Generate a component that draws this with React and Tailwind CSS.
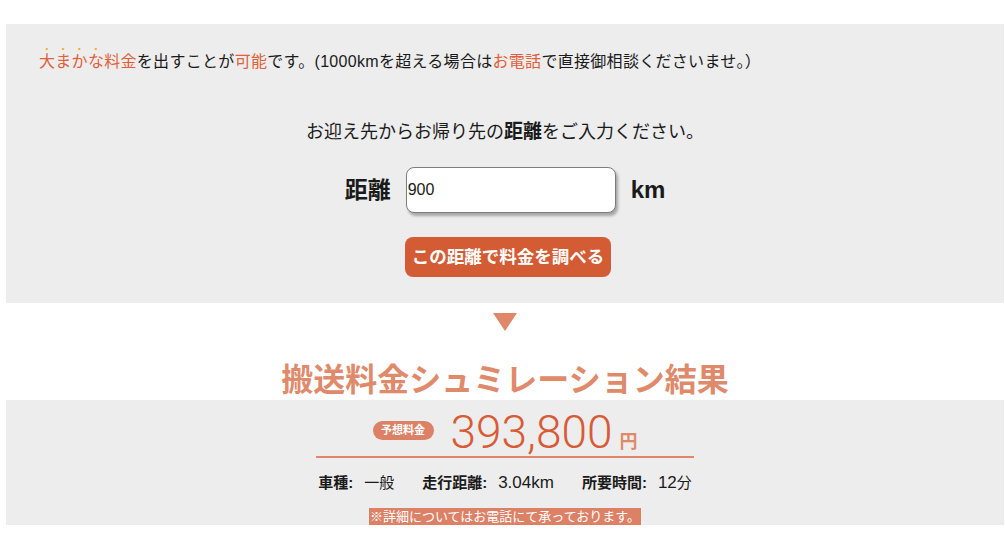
export default function App() {
  const jp = { fontFamily: '"Liberation Sans", "Noto Sans CJK JP", sans-serif' };
  const dot = "[text-emphasis-style:dot] [text-emphasis-color:#f5a623] [text-emphasis-position:over_right]";
  return (
    <div className="bg-white w-[1005px] h-[541px] pt-[24px] pl-[6px] pr-[1px] text-[#1a1a1a]" style={jp}>
      <div className="bg-[#ededed] h-[279px] flex flex-col">
        <p className="mt-[20px] ml-[33px] text-[16px] leading-[24px] tracking-[0.3px] whitespace-nowrap">
          <span className={`text-[#e0603a] ${dot}`}>大まかな</span>
          <span className="text-[#e0603a]">料金</span>を出すことが
          <span className="text-[#e0603a]">可能</span>です。(1000kmを超える場合は
          <span className="text-[#e0603a]">お電話</span>で直接御相談くださいませ。）
        </p>
        <p className="mt-[46px] text-center text-[18px] leading-[24px]">
          お迎え先からお帰り先の<b className="text-[19px]">距離</b>をご入力ください。
        </p>
        <div className="mt-[23px] h-[46px] flex items-center justify-center gap-[15px]">
          <span className="text-[23px] font-bold">距離</span>
          <div className="w-[210px] h-[46px] bg-white border border-[#7d7d7d] rounded-[8px] shadow-[2px_3px_3px_rgba(0,0,0,0.3)] flex items-center pl-[1px] text-[16px]">
            900
          </div>
          <span className="text-[24px] font-bold">km</span>
        </div>
        <div className="mt-[24px] flex justify-center pl-[6px]">
          <div className="w-[206px] h-[40px] bg-[#d45c35] rounded-[8px] flex items-center justify-center text-white font-bold text-[17.5px] whitespace-nowrap">
            この距離で料金を調べる
          </div>
        </div>
      </div>

      <div className="flex flex-col items-center">
        <svg width="24" height="18" viewBox="0 0 24 18" className="mt-[10px]">
          <polygon points="0,0 24,0 12,18" fill="#e0876a" />
        </svg>
        <h2 className="mt-[29px] h-[40px] leading-[40px] text-[32px] font-bold text-[#e08a6c] whitespace-nowrap">
          搬送料金シュミレーション結果
        </h2>
      </div>

      <div className="bg-[#ededed] h-[125px] flex flex-col items-center overflow-hidden">
        <div className="mt-[8px] h-[48px] flex items-center">
          <span className="h-[19px] w-[61px] rounded-full bg-[#dc8166] text-white text-[11px] font-bold leading-[19px] text-center mb-[4px]">
            予想料金
          </span>
          <span className="ml-[17px] flex items-baseline">
            <span className="text-[46px] leading-[48px] text-[#d85b36] font-light" style={{ fontFamily: 'Roboto, "Liberation Sans", sans-serif' }}>
              393,800
            </span>
            <span className="ml-[7px] text-[18px] font-bold text-[#e0896a]">円</span>
          </span>
        </div>
        <div className="w-[378px] h-[3px] bg-[#e0876a]"></div>
        <div className="mt-[15px] h-[20px] leading-[20px] text-[15px] flex items-center gap-[28px] whitespace-nowrap">
          <span><b>車種:</b><span className="ml-[11px]">一般</span></span>
          <span><b>走行距離:</b><span className="ml-[11px] text-[17px]">3.04km</span></span>
          <span><b>所要時間:</b><span className="ml-[11px]"><span className="text-[17px]">12</span>分</span></span>
        </div>
        <div className="mt-[15px] h-[17px] leading-[17px] bg-[#dc8166] text-white text-[13px] px-[1px] whitespace-nowrap">
          ※詳細についてはお電話にて承っております。
        </div>
      </div>
    </div>
  );
}
